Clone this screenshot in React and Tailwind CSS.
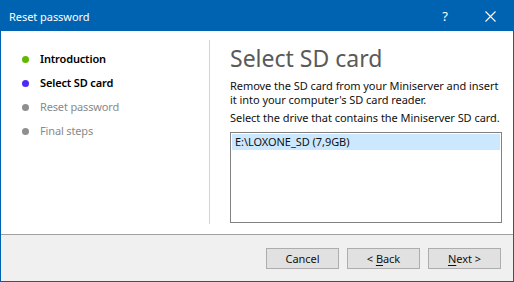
export default function App() {
  const steps = [
    { label: 'Introduction', dot: 'bg-[#62b800]', text: 'text-black font-semibold' },
    { label: 'Select SD card', dot: 'bg-[#4a2cf6]', text: 'text-black font-semibold' },
    { label: 'Reset password', dot: 'bg-[#8f8f8f]', text: 'text-[#8a8a8a]' },
    { label: 'Final steps', dot: 'bg-[#8f8f8f]', text: 'text-[#8a8a8a]' },
  ]

  return (
    <div className="w-[514px] h-[282px] flex flex-col border border-[#0063b1] bg-white font-['Noto_Sans',sans-serif] text-[11px] tracking-[-0.05px] text-[#111] overflow-hidden">
      {/* title bar */}
      <div className="h-[30px] shrink-0 bg-[#0063b1] flex items-center text-white">
        <span className="pl-2 text-[11px] leading-none">Reset password</span>
        <span className="ml-auto w-[44px] text-center text-[13px] leading-none">?</span>
        <span className="w-[46px] flex justify-center">
          <svg width="11" height="11" viewBox="0 0 11 11" stroke="white" strokeWidth="1.1">
            <path d="M0.5 0.5 L10.5 10.5 M10.5 0.5 L0.5 10.5" />
          </svg>
        </span>
      </div>

      {/* body */}
      <div className="h-[203px] shrink-0 flex pt-[9px] pb-[10px]">
        <div className="w-[208px] shrink-0 pt-[9px] pl-[21px] flex flex-col gap-[4px]">
          {steps.map((s) => (
            <div key={s.label} className="h-[20px] flex items-center gap-[11px]">
              <span className={`w-[7px] h-[7px] rounded-full ${s.dot}`} />
              <span className={`${s.text} tracking-[-0.15px]`}>{s.label}</span>
            </div>
          ))}
        </div>
        <div className="w-px bg-[#d4d4d4]" />
        <div className="flex-1 pl-[20px] pr-[11px] flex flex-col">
          <h1 className="text-[23px] leading-[28px] tracking-normal text-[#5a5a5a] mt-[4px]">Select SD card</h1>
          <p className="mt-[7px] leading-[13.5px] whitespace-nowrap">
            Remove the SD card from your Miniserver and insert
            <br />
            it into your computer's SD card reader.
          </p>
          <p className="mt-[5px] leading-[14px] whitespace-nowrap">Select the drive that contains the Miniserver SD card.</p>
          <div className="mt-[7px] h-[91px] border border-[#828282] p-px">
            <div className="h-[16px] bg-[#cce8ff] pl-[3px] leading-[15px]">E:\LOXONE_SD (7,9GB)</div>
          </div>
        </div>
      </div>

      {/* footer */}
      <div className="flex-1 border-t border-[#a0a0a0] bg-[#f0f0f0] flex items-start justify-end gap-[8px] pt-[13px] pr-[12px]">
        <button className="w-[73px] h-[21px] bg-[#e1e1e1] border border-[#adadad] leading-none">Cancel</button>
        <button className="w-[73px] h-[21px] bg-[#e1e1e1] border border-[#adadad] leading-none">
          &lt; <span className="underline underline-offset-2">B</span>ack
        </button>
        <button className="w-[73px] h-[21px] bg-[#e1e1e1] border border-[#adadad] leading-none">
          <span className="underline underline-offset-2">N</span>ext &gt;
        </button>
      </div>
    </div>
  )
}
